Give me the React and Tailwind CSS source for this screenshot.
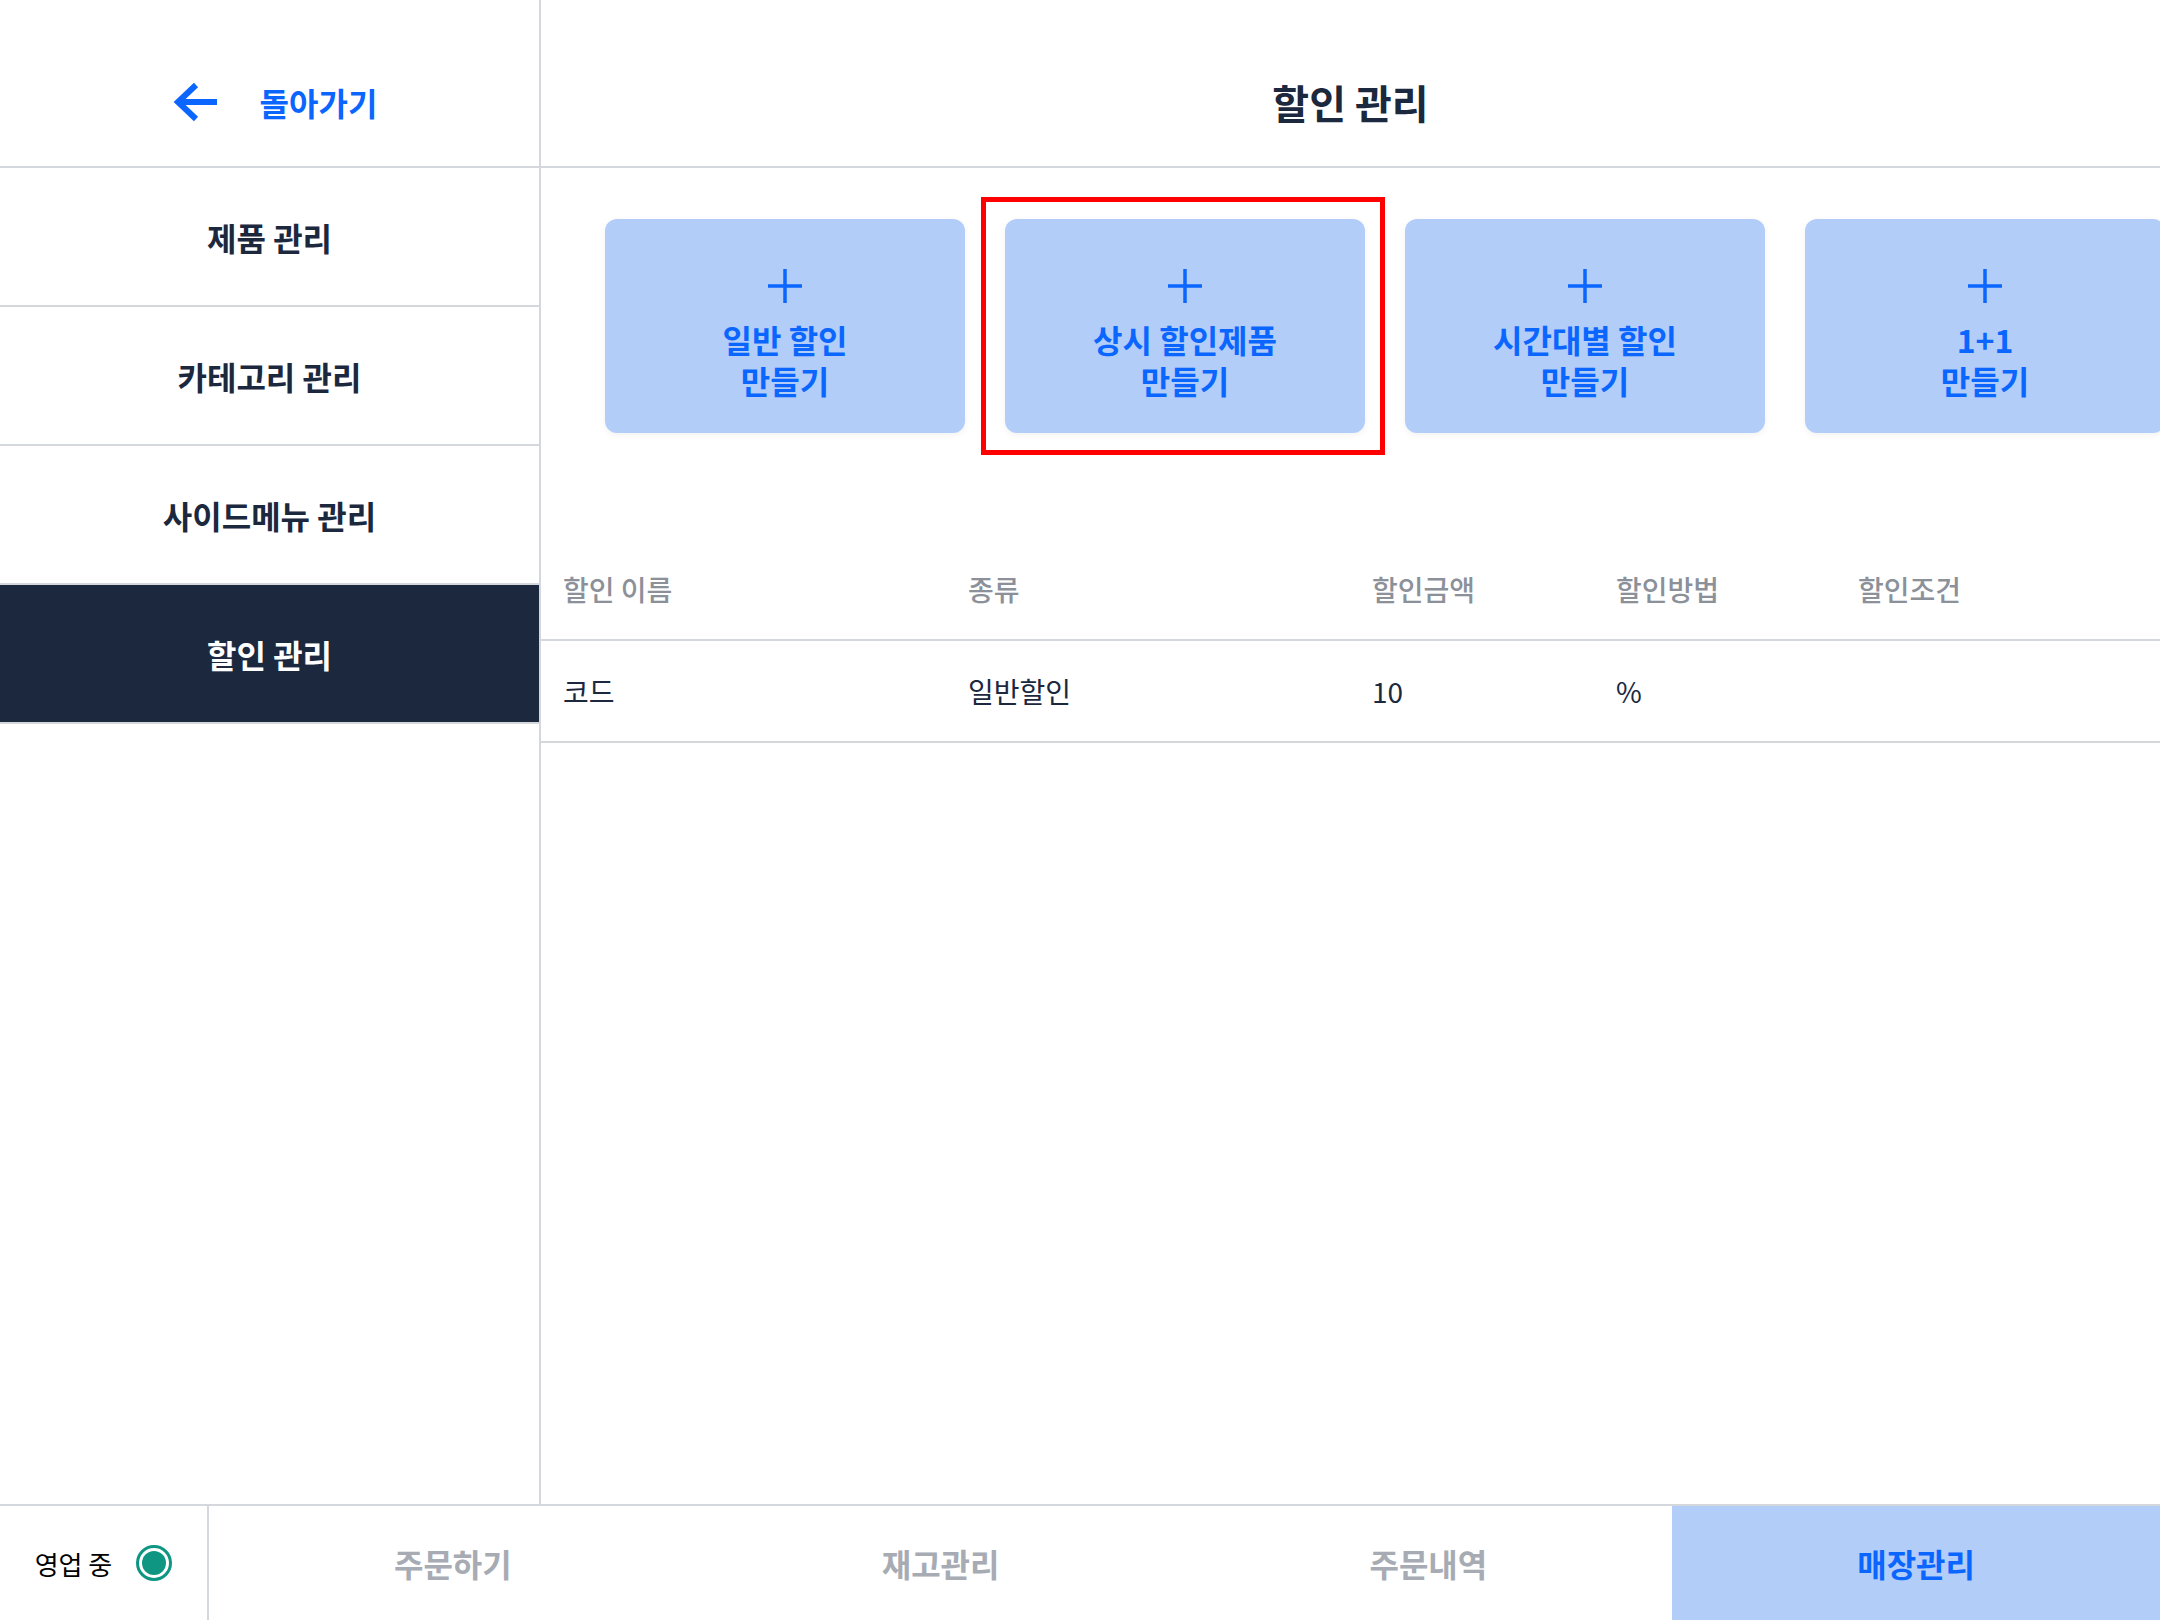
import { useState } from 'react';

const menus = ['제품 관리', '카테고리 관리', '사이드메뉴 관리', '할인 관리'];

const cards = [
  ['일반 할인', '만들기'],
  ['상시 할인제품', '만들기'],
  ['시간대별 할인', '만들기'],
  ['1+1', '만들기'],
];

const rows = [{ name: '코드', type: '일반할인', amount: '10', method: '%', cond: '' }];

const tabs = ['주문하기', '재고관리', '주문내역', '매장관리'];

const PlusIcon = () => (
  <svg width="38" height="38" viewBox="0 0 38 38" fill="none" stroke="#0a66ff" strokeWidth="3.5">
    <path d="M19 2V36M2 19H36" />
  </svg>
);

const DiscountCard = ({ lines, marked }) => (
  <div className="relative shrink-0">
    {marked && <div className="absolute -left-[24px] -right-[20px] -top-[22px] -bottom-[22px] border-[5px] border-[#ff0000]" />}
    <button className="w-[360px] h-[214px] rounded-[12px] bg-[#b1cdf8] shadow-[0_2px_6px_rgba(0,0,0,0.06)] flex flex-col items-center pt-[48px]">
      <PlusIcon />
      <div className="mt-[14px] text-[32px] leading-[41px] font-bold text-[#0a66ff] text-center">
        {lines.map(l => <div key={l}>{l}</div>)}
      </div>
    </button>
  </div>
);

export default function App() {
  const [active, setActive] = useState(3);
  const [tab, setTab] = useState(3);

  return (
    <div className="w-[2160px] h-[1620px] flex flex-col bg-white overflow-hidden" style={{ fontFamily: '"Noto Sans CJK KR", "Noto Sans", sans-serif' }}>
      <div className="flex flex-1 min-h-0">
        {/* sidebar */}
        <aside className="w-[541px] shrink-0 border-r-2 border-[#d4d7dc] flex flex-col">
          <div className="h-[168px] border-b-2 border-[#d4d7dc] flex items-center justify-center gap-[42px] pt-[38px] pl-[10px]">
            <svg width="46" height="42" viewBox="0 0 46 42" fill="none" stroke="#0a66ff" strokeWidth="6" strokeLinejoin="miter">
              <path d="M24 4L6 21L24 38M6 21H45" />
            </svg>
            <span className="text-[32px] font-bold text-[#0a66ff]">돌아가기</span>
          </div>
          {menus.map((m, i) => (
            <button
              key={m}
              onClick={() => setActive(i)}
              className={`h-[139px] border-b-2 border-[#d4d7dc] text-[32px] font-bold flex items-center justify-center ${active === i ? 'bg-[#1b283e] text-white' : 'text-[#1b283e]'}`}
            >
              {m}
            </button>
          ))}
        </aside>

        {/* main */}
        <main className="flex-1 min-w-0 flex flex-col">
          <div className="h-[168px] shrink-0 border-b-2 border-[#d4d7dc] flex items-center justify-center pt-[38px]">
            <h1 className="text-[40px] font-bold text-[#1b283e]">할인 관리</h1>
          </div>

          <div className="flex gap-[40px] pl-[64px] pt-[51px] pb-[30px] overflow-hidden">
            {cards.map((c, i) => (
              <DiscountCard key={i} lines={c} marked={i === 1} />
            ))}
          </div>

          <table className="mt-[76px] w-full table-fixed text-left">
            <colgroup>
              <col className="w-[405px]" />
              <col className="w-[404px]" />
              <col className="w-[244px]" />
              <col className="w-[242px]" />
              <col />
            </colgroup>
            <thead>
              <tr className="h-[101px] border-b-2 border-[#d4d7dc] text-[28px] text-[#8b9099]">
                <th className="pl-[22px] font-medium">할인 이름</th>
                <th className="pl-[22px] font-medium">종류</th>
                <th className="pl-[22px] font-medium">할인금액</th>
                <th className="pl-[22px] font-medium">할인방법</th>
                <th className="pl-[22px] font-medium">할인조건</th>
              </tr>
            </thead>
            <tbody>
              {rows.map(r => (
                <tr key={r.name} className="h-[102px] border-b-2 border-[#d4d7dc] text-[28px] text-[#1b283e]">
                  <td className="pl-[22px]">{r.name}</td>
                  <td className="pl-[22px]">{r.type}</td>
                  <td className="pl-[22px]">{r.amount}</td>
                  <td className="pl-[22px]">{r.method}</td>
                  <td className="pl-[22px]">{r.cond}</td>
                </tr>
              ))}
            </tbody>
          </table>
        </main>
      </div>

      {/* bottom bar */}
      <div className="h-[116px] shrink-0 border-t-2 border-[#d4d7dc] flex">
        <div className="w-[209px] shrink-0 border-r-2 border-[#d4d7dc] flex items-center justify-center gap-[24px]">
          <span className="text-[26px] text-black">영업 중</span>
          <span className="w-[36px] h-[36px] rounded-full border-[3px] border-[#0f9683] p-[3px] flex">
            <span className="flex-1 rounded-full bg-[#0f9683]" />
          </span>
        </div>
        {tabs.map((t, i) => (
          <button
            key={t}
            onClick={() => setTab(i)}
            className={`flex-1 flex items-center justify-center text-[32px] font-bold ${tab === i ? 'bg-[#b1cdf8] text-[#0a66ff]' : 'text-[#a7abb3]'}`}
          >
            {t}
          </button>
        ))}
      </div>
    </div>
  );
}
